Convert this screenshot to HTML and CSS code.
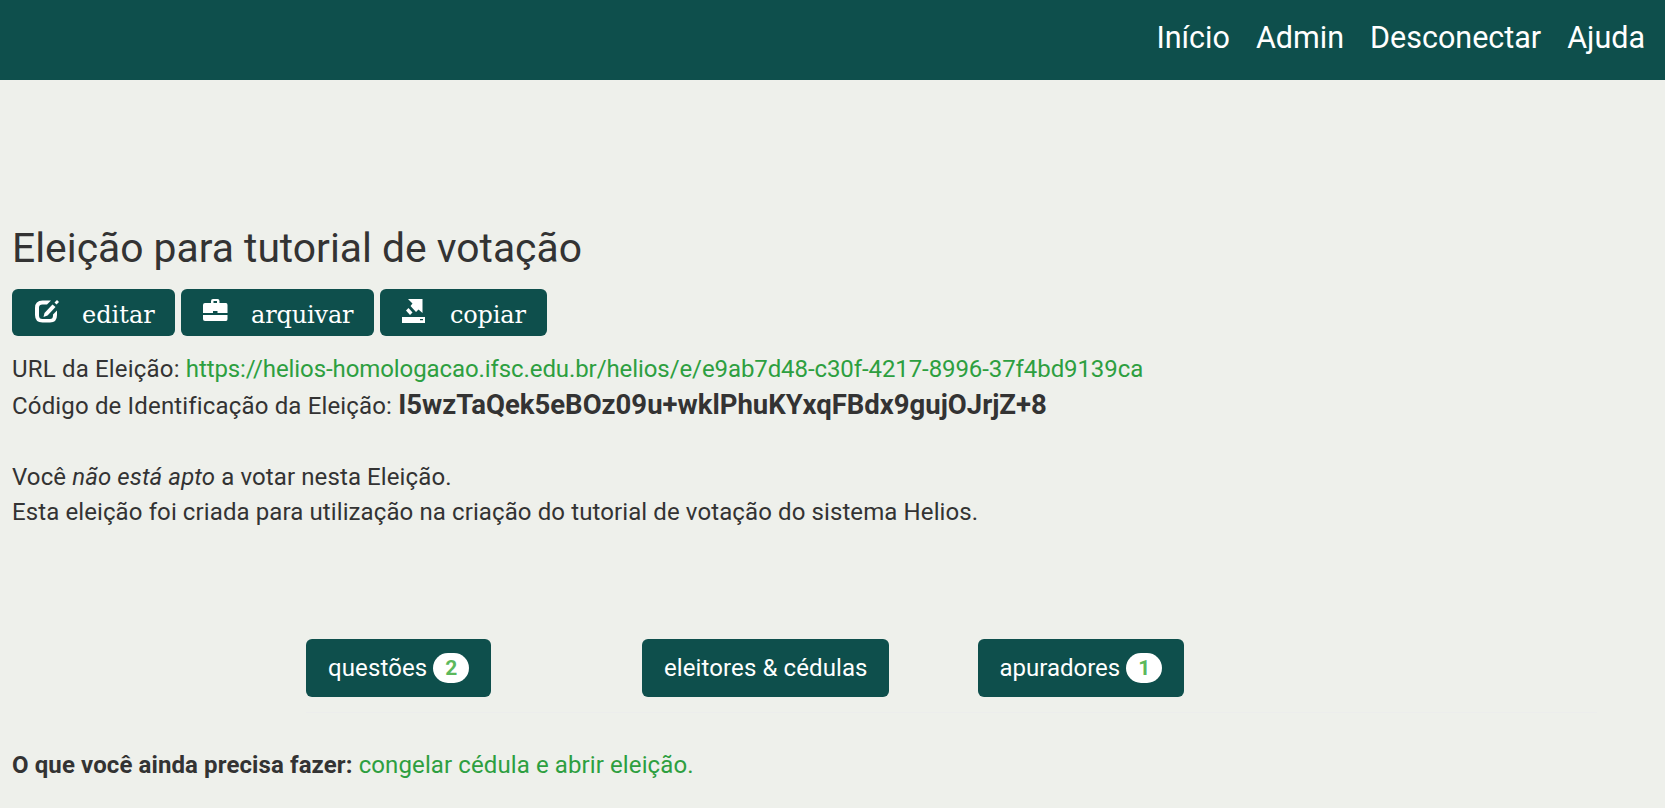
FILE: index.html
```html
<!DOCTYPE html>
<html lang="pt-BR">
<head>
<meta charset="utf-8">
<title>Eleição para tutorial de votação</title>
<link rel="stylesheet" href="styles.css">
</head>
<body>
<nav class="topbar">
  <a href="#">Início</a>
  <a href="#">Admin</a>
  <a href="#">Desconectar</a>
  <a href="#">Ajuda</a>
</nav>
<main class="content">
  <h1 class="title">Eleição para tutorial de votação</h1>
  <div class="actions">
    <a class="btn edit" href="#"><svg class="icon" viewBox="0 0 25 24"><path d="M17 1.500H8.500Q1 1.500 1 9V16Q1 23.500 8.500 23.500H16Q23 23.500 23 16V11.500L19 15.500V16.500Q19 20 16 20H8.500Q5 20 5 16.500V8.500Q5 5.500 8.500 5.500H13Z"/><path d="M9.500 18L10.500 14L18.500 5.500L21.500 8L13.500 16.500Z"/><path d="M20.500 3.500L23 1L25 3L22.500 5.500Z"/></svg><span>editar</span></a>
    <a class="btn archive" href="#"><svg class="icon" viewBox="0 0 25 24"><path fill-rule="evenodd" d="M8 4V2Q8 0 10 0H14.500Q16.500 0 16.500 2V4H23Q24.500 4 24.500 6V14H14.500V12H10V14H0V6Q0 4 2 4ZM10.500 4H14V2H10.500Z"/><path d="M0 16H24.500V20Q24.500 22 23 22H2Q0 22 0 20Z"/></svg><span>arquivar</span></a>
    <a class="btn copy" href="#"><svg class="icon" viewBox="0 0 25 24"><path d="M6 0H20.500V14L16.500 10.500L14 13L8.500 7L10.500 4.500Z"/><path d="M4 11.500L6.500 9L10.500 13.500L8 16Z"/><path fill-rule="evenodd" d="M0 18H23V24H0ZM18 20V21.200H21V20Z"/></svg><span>copiar</span></a>
  </div>
  <p class="line"><span class="label">URL da Eleição: </span><a class="url" href="#">https://helios-homologacao.ifsc.edu.br/helios/e/e9ab7d48-c30f-4217-8996-37f4bd9139ca</a></p>
  <p class="line ident"><span class="label">Código de Identificação da Eleição: </span><b class="code">I5wzTaQek5eBOz09u+wklPhuKYxqFBdx9gujOJrjZ+8</b></p>
  <p class="line status">Você <em>não está apto</em> a votar nesta Eleição.</p>
  <p class="line">Esta eleição foi criada para utilização na criação do tutorial de votação do sistema Helios.</p>
  <div class="sections">
    <div><a class="tab" href="#">questões <span class="badge">2</span></a></div>
    <div><a class="tab wide" href="#">eleitores &amp; cédulas</a></div>
    <div><a class="tab last" href="#">apuradores <span class="badge">1</span></a></div>
  </div>
  <p class="line todo"><b>O que você ainda precisa fazer:</b> <a href="#">congelar cédula e abrir eleição.</a></p>
</main>
</body>
</html>
```
FILE: styles.css
```css
* { box-sizing: border-box; }
body { margin: 0; background: #eef0eb; color: #333; font: 24px/35.500px Roboto, sans-serif; letter-spacing: 0.105px; }
a { color: #2d9f40; text-decoration: none; }
.topbar { height: 80px; background: #0e4f4c; display: flex; justify-content: flex-end; gap: 26px; padding: 19.500px 20px 0 0; font-size: 30.500px; letter-spacing: 0; }
.topbar a { color: #fff; }
.content { padding: 143px 12px 0; }
.title { margin: 0; font-size: 40.800px; font-weight: 400; line-height: 50px; letter-spacing: 0; }
.actions { display: flex; gap: 6px; margin-top: 16px; }
.btn { height: 47px; display: flex; border-radius: 6px; background: #0e4f4c; color: #fff; font: 24px/52px "DejaVu Serif", serif; padding-left: 21px; letter-spacing: -0.150px; }
.btn span { margin-left: 24px; }
.edit { width: 163px; letter-spacing: 0; }
.edit .icon { margin-left: 1px; }
.edit span { margin-left: 23px; }
.archive { width: 193px; padding-left: 22px; }
.archive span { margin-left: 23px; }
.copy { width: 167px; padding-left: 22px; }
.copy span { margin-left: 23px; }
.icon { width: 25px; height: 24px; margin-top: 10px; fill: currentColor; flex: none; }
.line { margin: 0; }
.actions + .line { margin-top: 16px; }
.label { letter-spacing: 0.180px; }
.url { letter-spacing: -0.090px; }
.ident { margin-top: -1px; }
.ident .label { letter-spacing: 0.160px; }
.code { font-size: 27.500px; letter-spacing: 0; }
.status { margin-top: 35.500px; }
.sections { margin: 108px 56px 0 294px; padding-bottom: 15px; border-bottom: 1px solid #ecedec; display: grid; grid-template-columns: 336px 335.500px 1fr; }
.tab { display: inline-flex; align-items: center; gap: 6px; height: 58px; border-radius: 6px; background: #0e4f4c; color: #fff; padding: 2px 22px 0; }
.wide { padding-right: 21px; }
.last { letter-spacing: 0; }
.badge { width: 36px; height: 30px; margin-top: -2px; border-radius: 15px; background: #fff; color: #5cb85c; font-weight: 700; font-size: 21px; line-height: 30px; letter-spacing: 0; text-align: center; }
.todo { margin-top: 35px; }
```
